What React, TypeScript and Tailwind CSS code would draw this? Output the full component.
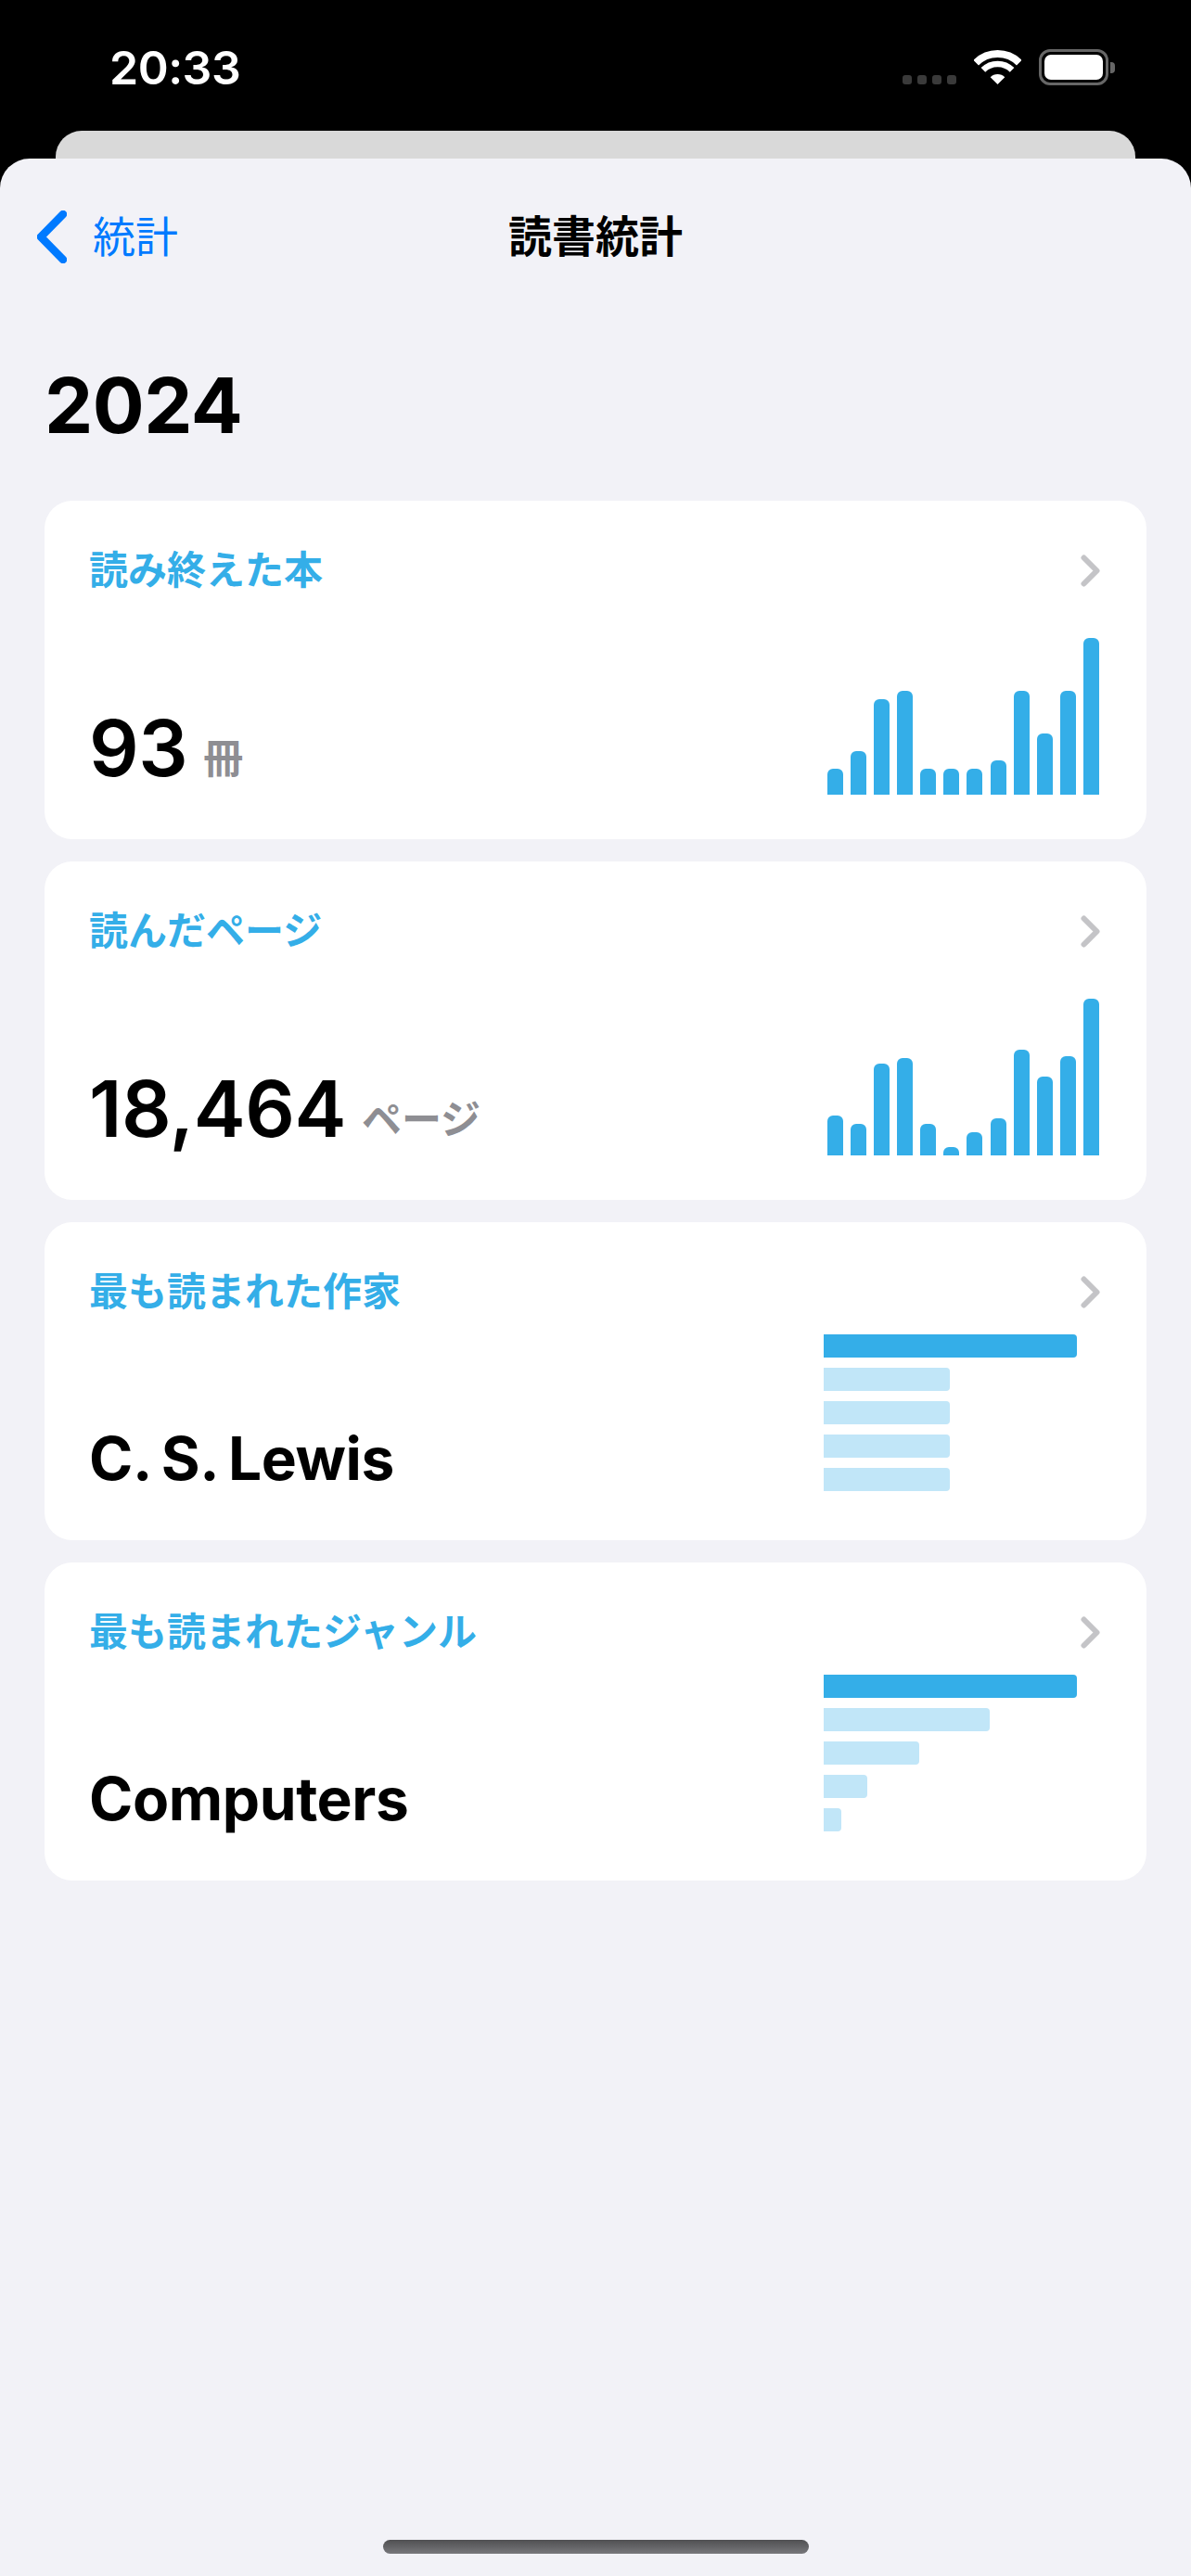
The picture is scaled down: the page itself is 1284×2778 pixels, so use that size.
const sans = "font-['Inter','Noto_Sans_CJK_JP',sans-serif]";
const cyan = "bg-[#34aee8]";

function Chevron() {
  return (
    <svg width="21" height="35" viewBox="0 0 21 35" fill="none" className="block">
      <polyline points="3.5,3.5 17.5,17.5 3.5,31.5" stroke="#c4c4c7" strokeWidth="6" strokeLinecap="round" strokeLinejoin="round" />
    </svg>
  );
}

function VBars({ heights }: { heights: number[] }) {
  return (
    <div className="mr-[1px] flex h-[169px] w-[293px] items-end justify-between">
      {heights.map((h, i) => (
        <div key={i} className={`w-[17px] rounded-t-[6px] ${cyan}`} style={{ height: h }} />
      ))}
    </div>
  );
}

function HBars({ widths }: { widths: number[] }) {
  return (
    <div className="flex h-[169px] w-[298px] flex-col gap-[11px]">
      {widths.map((w, i) => (
        <div
          key={i}
          className={`h-[25px] rounded-r-[4px] ${i === 0 ? "bg-[#34aee8]" : "bg-[#c1e6f8]"}`}
          style={{ width: w }}
        />
      ))}
    </div>
  );
}

function Header({ title }: { title: string }) {
  return (
    <div className="flex h-[54px] items-center justify-between">
      <span className="text-[42px] font-semibold leading-[54px] text-[#34aee8]">{title}</span>
      <Chevron />
    </div>
  );
}

function StatCard({ title, value, unit, heights }: { title: string; value: string; unit: string; heights: number[] }) {
  return (
    <section className="h-[365px] rounded-[30px] bg-white pb-[48px] pl-[48px] pr-[50px] pt-[48px]">
      <Header title={title} />
      <div className="mt-[46px] flex items-end justify-between">
        <div className="flex items-baseline gap-[17px]">
          <span className="text-[84px] font-semibold leading-[100px] tracking-[-0.5px] text-black">{value}</span>
          <span className="-translate-y-[3px] text-[43px] font-semibold leading-[50px] text-[#8e8e93]">{unit}</span>
        </div>
        <VBars heights={heights} />
      </div>
    </section>
  );
}

function TopCard({ title, value, widths }: { title: string; value: string; widths: number[] }) {
  return (
    <section className="h-[343px] rounded-[30px] bg-white pl-[48px] pr-[50px] pt-[48px]">
      <Header title={title} />
      <div className="mt-[19px] flex items-end justify-between">
        <span className="pb-[5px] text-[64px] font-bold leading-[60px] tracking-[-0.4px] text-black [word-spacing:-3px]">{value}</span>
        <HBars widths={widths} />
      </div>
    </section>
  );
}

function StatusBar() {
  return (
    <div className="flex h-[141px] items-start justify-between pl-[118px] pr-[82px] pt-[47px]">
      <span className="text-[50px] font-semibold leading-[52px] tracking-[-0.5px] text-white">20:33</span>
      <div className="flex items-start gap-[19px] pt-[6px]">
        <div className="flex gap-[6px] pt-[28px]">
          <div className="h-[10px] w-[10px] rounded-[3px] bg-[#3a3a3a]" />
          <div className="h-[10px] w-[10px] rounded-[3px] bg-[#3a3a3a]" />
          <div className="h-[10px] w-[10px] rounded-[3px] bg-[#3a3a3a]" />
          <div className="h-[10px] w-[10px] rounded-[3px] bg-[#3a3a3a]" />
        </div>
        <svg width="51" height="37" viewBox="0 0 51 37" fill="none" className="mt-[1px] block">
          <path d="M2.2 13.7A33 33 0 0 1 48.8 13.7" stroke="#fff" strokeWidth="8" />
          <path d="M9.9 21.4A22 22 0 0 1 41.1 21.4" stroke="#fff" strokeWidth="6.5" />
          <path d="M25.5 37L17.7 29.2A11 11 0 0 1 33.3 29.2Z" fill="#fff" />
        </svg>
        <div className="flex items-center gap-[2px]">
          <div className="h-[39px] w-[75px] rounded-[12px] border-[3px] border-[#666666] p-[3px]">
            <div className="h-full w-full rounded-[7px] bg-white" />
          </div>
          <div className="h-[12px] w-[5px] rounded-r-[4px] bg-[#666666]" />
        </div>
      </div>
    </div>
  );
}

export default function App() {
  return (
    <div className={`flex h-[2778px] w-[1284px] flex-col overflow-hidden bg-black ${sans}`}>
      <StatusBar />
      <div className="mx-[60px] h-[30px] shrink-0 rounded-t-[28px] bg-[#d9d9d9]" />
      <main className="flex flex-1 flex-col rounded-t-[32px] bg-[#f2f2f7] px-[48px]">
        <nav className="-mx-[8px] mt-[55px] grid h-[58px] grid-cols-3 items-center">
          <div className="flex items-center gap-[28px]">
            <svg width="32" height="57" viewBox="0 0 32 57" fill="none" className="block">
              <polyline points="28,4 4,28.5 28,53" stroke="#007aff" strokeWidth="8.5" strokeLinecap="round" strokeLinejoin="round" />
            </svg>
            <span className="text-[46px] leading-[58px] text-[#007aff]">統計</span>
          </div>
          <h1 className="text-center text-[47px] font-bold leading-[58px] text-black">読書統計</h1>
          <div />
        </nav>
        <h2 className="mt-[112px] text-[83px] font-bold leading-[82px] tracking-[-0.5px] text-black">2024</h2>
        <div className="mt-[62px] flex flex-col gap-[24px]">
          <StatCard title="読み終えた本" value="93" unit="冊" heights={[28, 47, 103, 112, 28, 28, 28, 37, 112, 66, 112, 169]} />
          <StatCard title="読んだページ" value="18,464" unit="ページ" heights={[43, 34, 99, 105, 34, 9, 25, 40, 114, 85, 107, 169]} />
          <TopCard title="最も読まれた作家" value="C. S. Lewis" widths={[273, 136, 136, 136, 136]} />
          <TopCard title="最も読まれたジャンル" value="Computers" widths={[273, 179, 103, 47, 19]} />
        </div>
        <div className="mb-[24px] mt-auto h-[15px] w-[459px] self-center rounded-[8px] bg-linear-to-b from-[#505052] to-[#78787c]" />
      </main>
    </div>
  );
}
